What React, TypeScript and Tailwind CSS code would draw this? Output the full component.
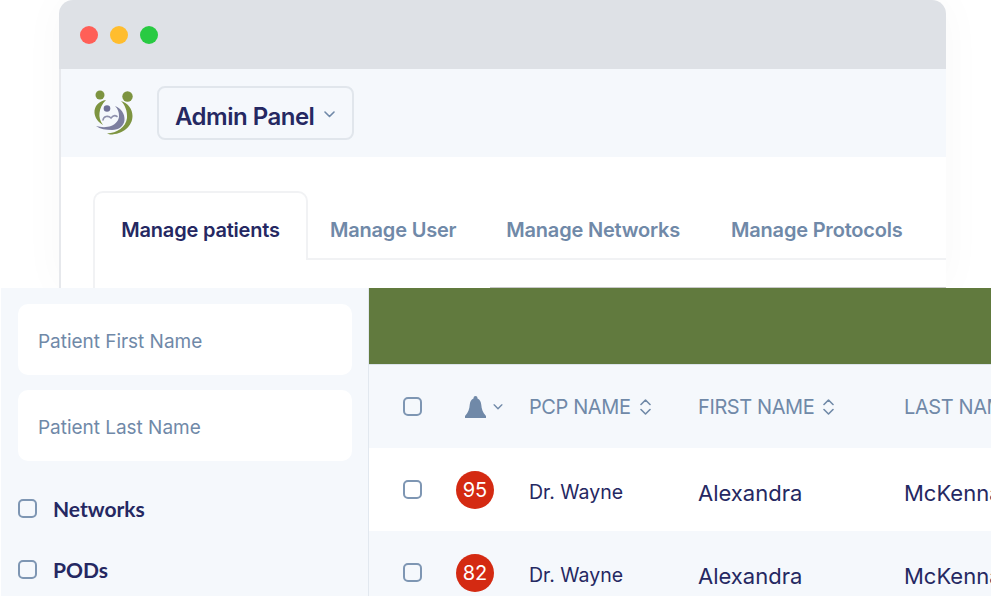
import React from "react";

const Checkbox: React.FC = () => (
  <span className="block h-[19px] w-[19px] shrink-0 rounded-[5px] border-2 border-[#7e96b3] bg-transparent" />
);

const Chevron: React.FC<{ width: number; height: number }> = ({ width, height }) => (
  <svg width={width} height={height} viewBox="0 0 11 7" fill="none" stroke="#7089a8" strokeWidth="1.6" strokeLinecap="round" strokeLinejoin="round" className="shrink-0">
    <path d="M1 1l4.500 4.500L10 1" />
  </svg>
);

const SortIcon: React.FC = () => (
  <svg width="11" height="16" viewBox="0 0 11 16" fill="none" stroke="#7089a8" strokeWidth="1.6" strokeLinecap="round" strokeLinejoin="round" className="shrink-0">
    <path d="M1 5.500 5.500 1 10 5.500" />
    <path d="M1 10.500 5.500 15 10 10.500" />
  </svg>
);

const BellIcon: React.FC = () => (
  <svg width="21" height="22" viewBox="0 0 21 22" fill="#7089a8" className="shrink-0">
    <path d="M10.500 0a2 2 0 0 1 2 2v.6C15 3.500 16 6 16.300 9c.3 4 1.200 7 4.700 11v2H0v-2c3.500-4 4.400-7 4.700-11C5 6 6 3.500 8.500 2.600V2a2 2 0 0 1 2-2Z" />
  </svg>
);

const Logo: React.FC = () => (
  <svg width="40" height="46" viewBox="0 0 40 46" fill="none" className="shrink-0">
    <circle cx="7" cy="5" r="4.500" fill="#7d9440" />
    <circle cx="34.500" cy="6.500" r="5.200" fill="#7d9440" />
    <path d="M13 10C6 11 1 16 1.500 23c.5 5 3.500 9 8.500 12-3-4-4-8-3.500-12 .5-5 2.500-9 6.500-13Z" fill="#7d9440" />
    <path d="M28 11c7 2 11.500 8 11.500 15 0 10-9.500 18.500-22.500 18.500l-3-1c10-.5 19-6.500 20-15.500.5-7-2-13-6-17Z" fill="#7d9440" />
    <circle cx="14" cy="18.500" r="3.300" fill="#6f7197" />
    <path d="M22 16c6 2 10 8 9.500 14-.5 6-5.500 10-12.500 10-6 0-12-1-16-4 5 1.500 11 1.500 15 0 5-2 8-6 8-10 0-4-1-7-4-10Z" fill="#7c7e9f" />
    <path d="M10 30c.5-3.500 5-5 8-2 2-2.500 4-3 6-1.500" stroke="#8f91ad" strokeWidth="1.600" strokeLinecap="round" />
  </svg>
);

const SearchField: React.FC<{ placeholder: string }> = ({ placeholder }) => (
  <div className="flex h-[71px] items-center rounded-[10px] bg-white pl-[20px] pt-[6px] text-[19px] tracking-[-0.03px] text-[#7089a8]">
    {placeholder}
  </div>
);

const FilterRow: React.FC<{ label: string; className: string }> = ({ label, className }) => (
  <div className={`flex items-center gap-[16px] ${className}`}>
    <Checkbox />
    <span className="font-['Lato',sans-serif] text-[21px] font-bold text-[#252862]">{label}</span>
  </div>
);

const PatientRow: React.FC<{ score: number; className: string }> = ({ score, className }) => (
  <div className={`flex h-[83px] items-center whitespace-nowrap text-[#252862] ${className}`}>
    <div className="ml-[34px] w-[53px] shrink-0">
      <Checkbox />
    </div>
    <div className="flex h-[38px] w-[38px] shrink-0 items-center justify-center rounded-full bg-[#d42a12] text-[20px] text-white">
      {score}
    </div>
    <div className="ml-[35px] w-[169px] shrink-0 pt-[6px] text-[19.500px]">Dr. Wayne</div>
    <div className="w-[206px] shrink-0 pt-[8px] text-[22px]">Alexandra</div>
    <div className="shrink-0 pt-[8px] text-[22px]">McKenna</div>
  </div>
);

export default function App() {
  return (
    <div className="flex h-[597px] w-[992px] flex-col overflow-hidden bg-white font-['Inter',sans-serif]">
      {/* Browser window behind the app panel */}
      <div className="h-[288px] shrink-0 pl-[59px] pr-[46px]">
        <div className="flex h-full flex-col rounded-t-[14px] bg-white shadow-[0_0_45px_rgba(0,0,0,0.03)]">
          <div className="flex h-[69px] shrink-0 items-center gap-[12px] rounded-t-[14px] bg-[#dee1e6] pl-[21px]">
            <span className="h-[18px] w-[18px] rounded-full bg-[#ff5f57]" />
            <span className="h-[18px] w-[18px] rounded-full bg-[#ffbd2e]" />
            <span className="h-[18px] w-[18px] rounded-full bg-[#28ca42]" />
          </div>
          <div className="flex h-[88px] shrink-0 items-center border-l-2 border-[#e6e8ec] bg-[#f5f8fc] pl-[32px]">
            <Logo />
            <div className="ml-[24px] flex h-[54px] w-[197px] items-center rounded-[8px] border-2 border-[#e1e6ec] pl-[16px] pt-[8px] text-[24px] font-semibold tracking-[-0.5px] text-[#252862]">
              Admin Panel
              <span className="ml-[10px] -mt-[5px]">
                <Chevron width={11} height={7} />
              </span>
            </div>
          </div>
          <div className="flex min-h-0 flex-1 flex-col border-l-2 border-[#e6e8ec]">
            <div className="mt-[34px] flex pl-[32px]">
              <div className="flex h-[69px] w-[215px] shrink-0 items-center justify-center rounded-t-[10px] border-2 border-b-0 border-[#f1f2f4] pt-[6px] text-[20px] font-semibold tracking-[-0.2px] text-[#252862]">
                Manage patients
              </div>
              <div className="flex h-[69px] flex-1 items-center border-b-2 border-[#f1f2f4] pt-[10px] text-[20px] font-semibold tracking-[-0.2px] text-[#7089a8]">
                <span className="ml-[22px]">Manage User</span>
                <span className="ml-[50px]">Manage Networks</span>
                <span className="ml-[51px]">Manage Protocols</span>
              </div>
            </div>
            <div className="flex min-h-0 flex-1 pl-[32px]">
              <div className="w-[2px] bg-[#f1f2f4]" />
              <div className="ml-[395px] mt-auto h-px flex-1 bg-[#c8c8c8]" />
            </div>
          </div>
        </div>
      </div>

      {/* App panel */}
      <div className="relative flex h-[308px] w-[991px] shrink-0">
        <aside className="ml-px h-full w-[368px] shrink-0 border-r border-[#e2e8ef] bg-[#f5f8fc] pl-[17px] pt-[16px]">
          <div className="flex w-[334px] flex-col gap-[15px]">
            <SearchField placeholder="Patient First Name" />
            <SearchField placeholder="Patient Last Name" />
          </div>
          <FilterRow label="Networks" className="mt-[32px]" />
          <FilterRow label="PODs" className="mt-[29px]" />
        </aside>
        <main className="min-w-0 flex-1 overflow-hidden">
          <div className="h-[76px] bg-[#617a3e]" />
          <div className="flex h-[84px] items-center whitespace-nowrap border-t border-[#dbe3ea] bg-[#f5f8fc] text-[20px] tracking-[-0.4px] text-[#7089a8]">
            <div className="ml-[34px] w-[62px] shrink-0">
              <Checkbox />
            </div>
            <div className="flex w-[64px] shrink-0 items-center gap-[7px]">
              <BellIcon />
              <Chevron width={10} height={6} />
            </div>
            <div className="flex w-[169px] shrink-0 items-center gap-[9px]">
              PCP NAME <SortIcon />
            </div>
            <div className="flex w-[206px] shrink-0 items-center gap-[9px]">
              FIRST NAME <SortIcon />
            </div>
            <div className="shrink-0">LAST NAME</div>
          </div>
          <PatientRow score={95} className="bg-white" />
          <PatientRow score={82} className="bg-[#f5f8fc]" />
        </main>
      </div>
    </div>
  );
}
